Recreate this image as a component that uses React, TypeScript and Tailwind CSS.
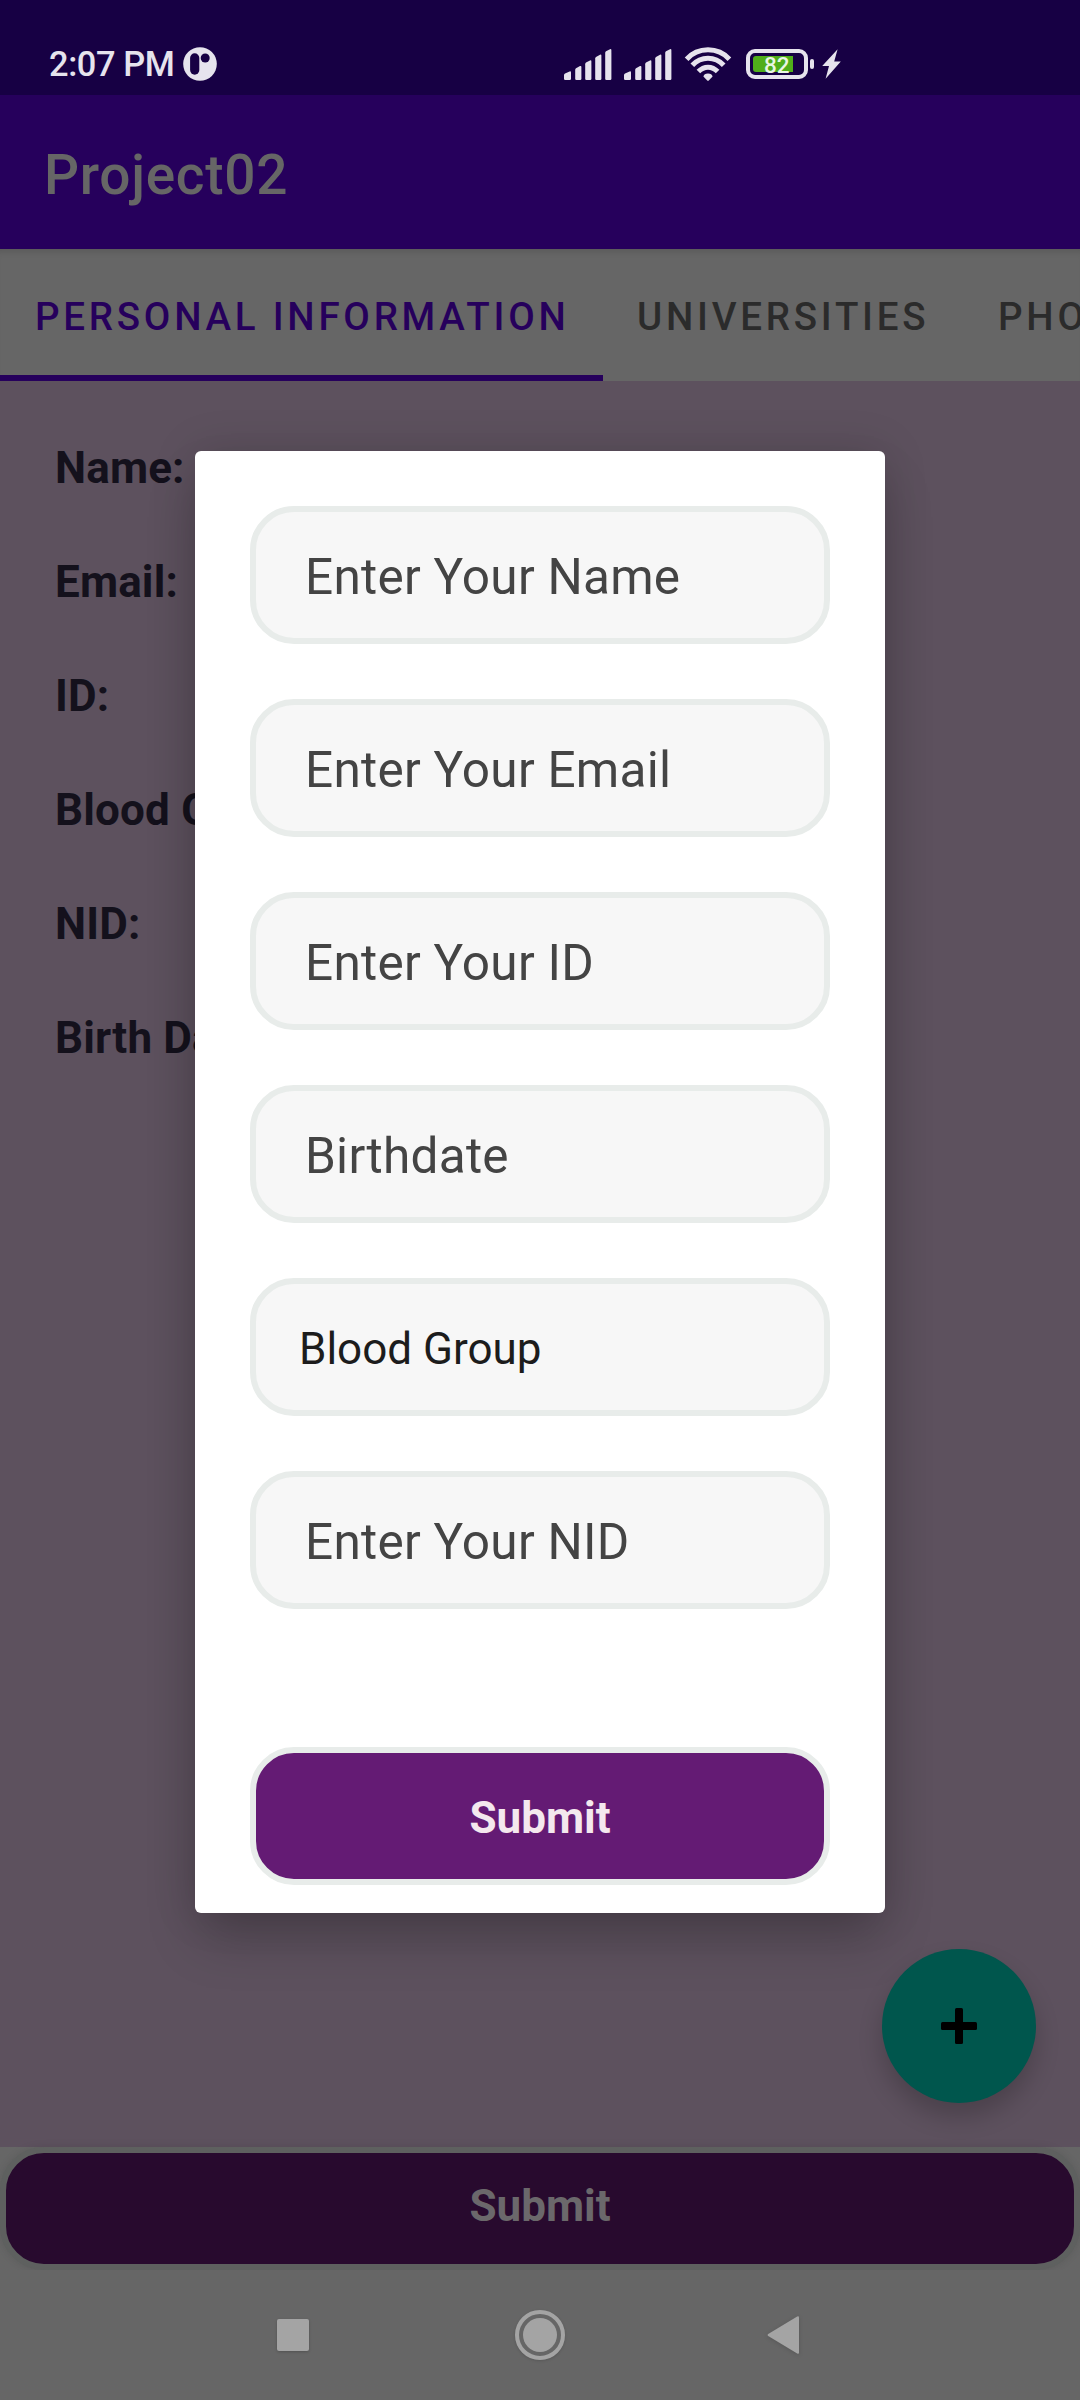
const labels = ["Name:", "Email:", "ID:", "Blood Group:", "NID:", "Birth Date:"];

const fields = [
  { text: "Enter Your Name", select: false },
  { text: "Enter Your Email", select: false },
  { text: "Enter Your ID", select: false },
  { text: "Birthdate", select: false },
  { text: "Blood Group", select: true },
  { text: "Enter Your NID", select: false },
];

function NotificationIcon() {
  return (
    <svg className="ml-[10px] h-[34px] w-[34px]" viewBox="0 0 34 34">
      <circle cx="17" cy="17" r="16.8" fill="#e6e3ed" />
      <rect x="7.1" y="6.3" width="9.2" height="21.4" rx="4.6" fill="#170044" />
      <circle cx="22.2" cy="11" r="4.5" fill="#170044" />
    </svg>
  );
}

function SignalIcon() {
  return (
    <svg className="mr-[12px] h-[31px] w-[48px]" viewBox="0 0 48 31" fill="#e6e3ed">
      <path d="M0 26 Q0 25 1 24.4 L5.6 22.4 Q7 22 7 23.4 V29.8 Q7 31 5.8 31 H1.2 Q0 31 0 29.8Z" />
      <path d="M11.2 21 Q11.2 20 12 19.3 L16 17 Q17.4 16.5 17.4 18 V29.8 Q17.4 31 16.2 31 H12.4 Q11.2 31 11.2 29.8Z" />
      <path d="M21.2 15.3 Q21.2 14.3 22 13.6 L26 11.4 Q27.4 11 27.4 12.4 V29.8 Q27.4 31 26.2 31 H22.4 Q21.2 31 21.2 29.8Z" />
      <path d="M31.2 9.6 Q31.2 8.6 32 7.9 L36 5.7 Q37.4 5.3 37.4 6.7 V29.8 Q37.4 31 36.2 31 H32.4 Q31.2 31 31.2 29.8Z" />
      <path d="M41.2 3.9 Q41.2 2.9 42 2.2 L46 0.2 Q47.4 -0.2 47.4 1.2 V29.8 Q47.4 31 46.2 31 H42.4 Q41.2 31 41.2 29.8Z" />
    </svg>
  );
}

function WifiIcon() {
  return (
    <svg className="h-[34px] w-[48px]" viewBox="0 0 48 34" fill="none" stroke="#e6e3ed" strokeWidth="5">
      <path d="M2.6 12.2 C14 -0.3 34 -0.3 45.4 12.2" />
      <path d="M8.3 18.3 C17 9 31 9 39.7 18.3" />
      <path d="M14.4 24.6 C20 18.8 28 18.8 33.6 24.6" />
      <path d="M19.4 29.6 Q20 26.6 24 26.6 Q28 26.6 28.6 29.6 L24.8 33.4 Q24 34 23.2 33.4Z" fill="#e6e3ed" stroke="none" />
    </svg>
  );
}

function Battery() {
  return (
    <div className="ml-[14px] flex items-center gap-[2px]">
      <div className="relative h-[30px] w-[62px] rounded-[9px] border-4 border-[#e6e3ed] p-[3px]">
        <div className="h-[16px] w-[40px] rounded-l-[3px] bg-[#50ae1a]" />
        <span className="absolute top-[-1px] left-[14px] text-[22.5px] leading-[26px] font-medium text-[#e9f6e4]">82</span>
      </div>
      <div className="h-[10px] w-[4px] rounded-[2px] bg-[#e6e3ed]" />
    </div>
  );
}

function StatusBar() {
  return (
    <div className="flex h-[95px] shrink-0 items-center bg-[#170044] pt-[33px] text-[#e6e3ed]">
      <span className="ml-[49px] w-[124px] text-[34.4px] leading-[40px] font-medium tracking-[-0.4px] whitespace-nowrap">2:07 PM</span>
      <NotificationIcon />
      <div className="ml-[347px] flex items-center">
        <SignalIcon />
        <SignalIcon />
        <WifiIcon />
        <Battery />
        <svg className="ml-[8px] h-[30px] w-[19px]" viewBox="0 0 19 30" fill="#e6e3ed">
          <path d="M15.6 0.2 L0.2 17 H7 L3.6 29.8 L18.8 12.6 H12.2Z" />
        </svg>
      </div>
    </div>
  );
}

function Tabs() {
  return (
    <div className="flex h-[132px] shrink-0 overflow-hidden bg-[#666666] text-[38.5px] leading-[45px] font-medium tracking-[3.75px] whitespace-nowrap text-[#2b2b2b] shadow-[inset_0_8px_6px_-5px_rgba(0,0,0,0.12)]">
      <div className="w-[603px] shrink-0 border-b-6 border-[#26005c] pt-[45px] pl-[35px] text-[#26005c]">PERSONAL INFORMATION</div>
      <div className="w-[360px] shrink-0 pt-[45px] pl-[34px]">UNIVERSITIES</div>
      <div className="shrink-0 pt-[45px] pl-[35px]">PHO</div>
    </div>
  );
}

function NavBar() {
  return (
    <div className="flex h-[130px] shrink-0 items-center bg-[#666666]">
      <div className="ml-[277px] h-[32px] w-[32px] rounded-[2px] bg-[#a4a4a4] shadow-[0_1px_3px_rgba(0,0,0,0.2)]" />
      <div className="ml-[206px] flex h-[50px] w-[50px] items-center justify-center rounded-full border-4 border-[#a4a4a4] shadow-[0_1px_3px_rgba(0,0,0,0.15)]">
        <div className="h-[34px] w-[34px] rounded-full bg-[#a4a4a4]" />
      </div>
      <svg className="ml-[202px] h-[38px] w-[32px] drop-shadow-sm" viewBox="0 0 32 38" fill="#a4a4a4">
        <path d="M30.2 0.4 Q32 -0.4 32 1.6 V36.4 Q32 38.4 30.2 37.4 L1.2 20 Q0 19 1.2 18Z" />
      </svg>
    </div>
  );
}

function EntryDialog() {
  return (
    <div className="absolute top-[451px] left-[195px] flex h-[1462px] w-[690px] flex-col rounded-[6px] bg-white px-[55px] pt-[55px] shadow-[0_30px_50px_-6px_rgba(0,0,0,0.22),0_0_46px_rgba(0,0,0,0.13)]">
      <div className="flex flex-col gap-[55px]">
        {fields.map((f) => (
          <div
            key={f.text}
            className={
              f.select
                ? "flex h-[138px] items-center rounded-[44px] border-6 border-[#e8ecea] bg-[#f7f7f7] pt-[4px] pl-[43px] text-[44px] text-[#1c1c1c]"
                : "flex h-[138px] items-center rounded-[44px] border-6 border-[#e8ecea] bg-[#f7f7f7] pt-[5px] pl-[49px] text-[49.5px] tracking-[0.25px] text-[#444444]"
            }
          >
            {f.text}
          </div>
        ))}
      </div>
      <button className="mt-[138px] h-[138px] rounded-[44px] border-6 border-[#e8ecea] bg-[#641b74] pt-[4px] text-[44px] font-bold text-[#f4e8ee]">
        Submit
      </button>
    </div>
  );
}

export default function App() {
  return (
    <div className="relative flex h-[2400px] w-[1080px] flex-col overflow-hidden bg-[#666666] font-['Roboto',sans-serif]">
      <StatusBar />
      <header className="flex h-[154px] shrink-0 items-center bg-[#26005c] pt-[6px] pl-[44px] text-[55px] font-medium tracking-[0.7px] text-[#666666]">
        Project02
      </header>
      <Tabs />
      <main className="h-[1766px] shrink-0 bg-[#5d515e] pt-[60px] pl-[55px] text-[44px] leading-[54px] font-bold text-[#14111c]">
        <div className="flex flex-col gap-[60px]">
          {labels.map((l) => (
            <div key={l} className="tracking-[0.15px]">{l}</div>
          ))}
        </div>
      </main>
      <button className="h-[123px] shrink-0 rounded-[44px] border-6 border-[#5e605f] bg-[#280a2e] pb-[5px] text-[44px] font-bold text-[#6b686b] shadow-[0_0_8px_rgba(0,0,0,0.1)]">
        Submit
      </button>
      <NavBar />
      <button className="absolute top-[1949px] left-[882px] flex h-[154px] w-[154px] items-center justify-center rounded-full bg-[#00564d] shadow-[0_14px_24px_rgba(0,0,0,0.2)]">
        <svg className="h-[36px] w-[36px]" viewBox="0 0 36 36" fill="#000000">
          <rect x="0" y="14" width="36" height="8" rx="1.5" />
          <rect x="14" y="0" width="8" height="36" rx="1.5" />
        </svg>
      </button>
      <EntryDialog />
    </div>
  );
}
